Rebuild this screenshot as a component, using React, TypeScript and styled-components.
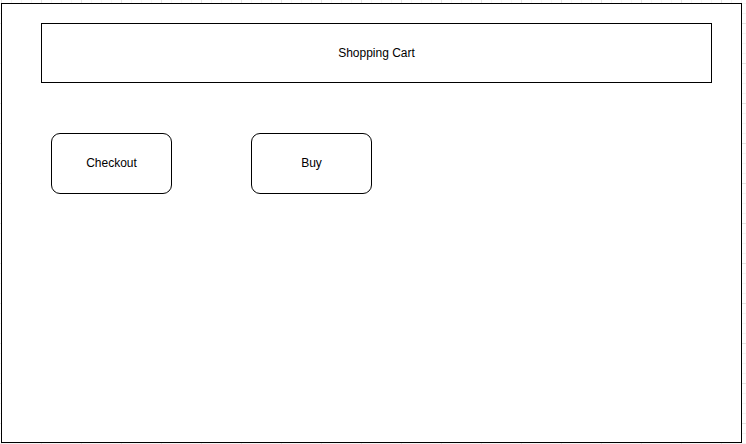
import styled, { createGlobalStyle } from 'styled-components';

const GlobalStyle = createGlobalStyle`
  html, body {
    margin: 0;
    padding: 0;
  }

  body {
    width: 746px;
    height: 444px;
    overflow: hidden;
    font-family: 'Liberation Sans', Arial, sans-serif;
    background-color: #ffffff;
    background-image:
      linear-gradient(to right, #e4e4e4 1px, transparent 1px),
      linear-gradient(to bottom, #e4e4e4 1px, transparent 1px),
      linear-gradient(to right, #f4f4f4 1px, transparent 1px),
      linear-gradient(to bottom, #f4f4f4 1px, transparent 1px);
    background-size: 40px 40px, 40px 40px, 10px 10px, 10px 10px;
    background-position: 1px 0, 0 23px, 1px 0, 0 3px;
  }
`;

const Canvas = styled.div`
  padding: 3px 0 0 1px;
`;

const Frame = styled.div`
  box-sizing: border-box;
  width: 741px;
  height: 440px;
  padding: 19px 0 0 39px;
  border: 1px solid #000;
  background: #fff;
`;

const Header = styled.div`
  box-sizing: border-box;
  width: 671px;
  height: 60px;
  border: 1px solid #000;
  display: flex;
  align-items: center;
  justify-content: center;
  font-size: 12px;
  color: #000;
`;

const ButtonRow = styled.div`
  display: flex;
  gap: 79px;
  margin-top: 50px;
  padding-left: 10px;
`;

const Action = styled.button`
  box-sizing: border-box;
  width: 121px;
  height: 61px;
  padding: 0 0 2px;
  border: 1px solid #000;
  border-radius: 9px;
  background: #fff;
  font-family: 'Liberation Sans', Arial, sans-serif;
  font-size: 12px;
  color: #000;
  cursor: pointer;
`;

export default function App() {
  return (
    <>
      <GlobalStyle />
      <Canvas>
        <Frame>
          <Header>Shopping Cart</Header>
          <ButtonRow>
            <Action>Checkout</Action>
            <Action>Buy</Action>
          </ButtonRow>
        </Frame>
      </Canvas>
    </>
  );
}
